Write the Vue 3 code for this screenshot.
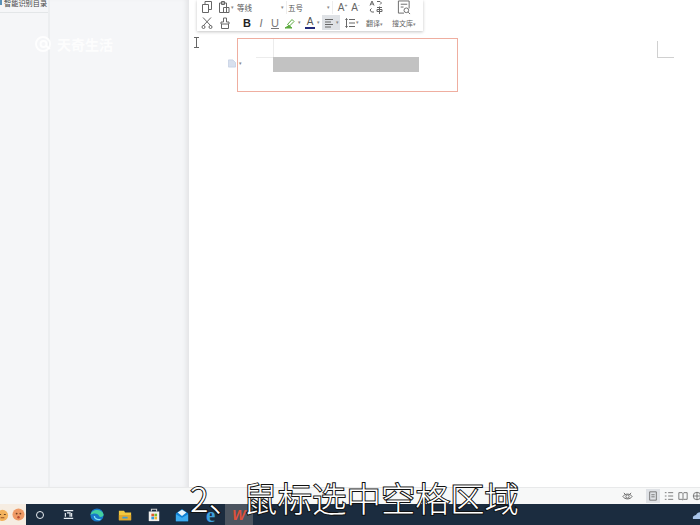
<template>
  <div class="screen">
    <div class="main">
      <!-- left panels -->
      <aside class="side">
        <div class="nav">
          <div class="nav-top"><i class="nav-dot"></i>智能识别目录</div>
        </div>
        <div class="pane"></div>
      </aside>

      <!-- document -->
      <section class="doc">
        <div class="toolbar">
          <div class="tool-row">
            <svg class="ic" viewBox="0 0 12 12"><path d="M1.500 3.500h6v8h-6zM4 3.500v-3h6.500v8H7.500" /></svg>
            <svg class="ic paste" viewBox="0 0 12 12"><path d="M1.500 2h7v9.500h-7zM3.500 .5h3v3h-3zM5.500 6.500h5.500v5H5.500z" /></svg>
            <span class="caret c1">▾</span>
            <div class="select first"><span>等线</span><span class="caret">▾</span></div>
            <div class="select second"><span>五号</span><span class="caret">▾</span></div>
            <span class="grow up">A<sup>+</sup></span>
            <span class="grow">A<sup>-</sup></span>
            <svg class="ic-big trans" viewBox="0 0 14 14"><path d="M1 5 3 .5 5 5M1.700 3.500h2.600M8 1h3l1.500 1.500L11 4M2.500 8 1 9.500 2.500 11.500H5M8 7h5M8 9h5v2H8zM10.500 6v7.500" /></svg>
            <svg class="ic-big search" viewBox="0 0 15 15"><path d="M1.500 .5h11.500v8M1.500 .5v13h6M4 4h7M4 7h3" /><circle cx="10" cy="10.500" r="2.500" /><path d="m12 12.500 2 2" /></svg>
          </div>
          <div class="tool-row">
            <svg class="ic" viewBox="0 0 12 12"><path d="M2 .5 10 9M10 .5 2 9" /><circle cx="2.500" cy="10" r="1.500" /><circle cx="9.500" cy="10" r="1.500" /></svg>
            <svg class="ic brush" viewBox="0 0 12 12"><path d="M4.500 1h3v4h2.500v2H2V5h2.500zM2.500 7v4.500h7V7" /></svg>
            <b class="fmt bold">B</b>
            <i class="fmt">I</i>
            <u class="fmt">U</u>
            <svg class="ic marker" viewBox="0 0 12 12"><path class="green" d="M1 11h7L5 8.500z" /><path class="green-line" d="M3.500 7.500 8 2.500l2 2-4.500 4.500z" /></svg>
            <span class="caret c2">▾</span>
            <span class="color-a">A</span>
            <span class="caret c2">▾</span>
            <div class="align-on">
              <svg class="ic" viewBox="0 0 12 12"><path d="M1 2.500h8M1 5h6M1 7.500h8M1 10h6" /></svg>
              <span class="caret">▾</span>
            </div>
            <svg class="ic list" viewBox="0 0 12 12"><path d="M5 2.500h6M5 6h6M5 9.500h6M2.500 1.500v9M1.500 3 2.500 1.500 3.500 3M1.500 9l1 1.500L3.500 9" /></svg>
            <span class="caret">▾</span>
            <span class="tool-text tr">翻译<span class="caret">▾</span></span>
            <span class="tool-text lib">搜文库<span class="caret">▾</span></span>
          </div>
        </div>

        <div class="page-area">
          <svg class="ibeam" viewBox="0 0 7 11"><path d="M1 .5h5M1 10.500h5M3.500 .5v10" /></svg>
          <div class="handle">
            <svg class="handle-ic" viewBox="0 0 9 9"><path d="M.5.5h5l3 3v5H.5z" /></svg>
            <span class="caret">▾</span>
          </div>
          <div class="selected-box">
            <div class="margin-mark"></div>
            <div class="gray-sel"></div>
          </div>
          <div class="corner"></div>
        </div>
      </section>
    </div>

    <footer class="status">
      <svg class="st eye" viewBox="0 0 12 12"><path d="M1 6c2-3.500 8-3.500 10 0-2 3.500-8 3.500-10 0zM2 2l1.500 1.500M10 2 8.500 3.500" /><circle cx="6" cy="6" r="1.800" /></svg>
      <div class="st-on">
        <svg class="st" viewBox="0 0 12 12"><path d="M2 1h8v10H2zM4 4.500h4M4 7h4" /></svg>
      </div>
      <svg class="st" viewBox="0 0 12 12"><path d="M1 2h2M5 2h6M1 6h2M5 6h6M1 10h2M5 10h6" /></svg>
      <svg class="st" viewBox="0 0 12 12"><path d="M1 2h4l1 1 1-1h4v8H7l-1 1-1-1H1zM6 3v7" /></svg>
      <svg class="st" viewBox="0 0 12 12"><circle cx="6" cy="6" r="4.500" /><path d="M1.500 6h9M6 1.500v9" /></svg>
    </footer>

    <nav class="taskbar">
      <div class="emoji-box">
        <svg class="face" viewBox="0 0 14 14"><circle cx="7" cy="8" r="6" fill="#f3b25c" /><path d="M3.500 7h2M8.500 7h2" stroke="#5a3a20" fill="none" /><path d="M5 10.500h4" stroke="#8a4a20" fill="none" /></svg>
        <svg class="face" viewBox="0 0 14 14"><circle cx="7" cy="7" r="6.500" fill="#ee9a66" /><circle cx="5" cy="6" r="1" fill="#704020" /><circle cx="9" cy="6" r="1" fill="#704020" /><circle cx="7" cy="10" r="1.300" fill="#b84a30" /></svg>
      </div>
      <div class="task-icons">
        <div class="ti"><span class="search-ring"></span></div>
        <div class="ti">
          <svg class="t-ic" viewBox="0 0 14 14"><path d="M1 2h12M1 12h12" stroke="#e8edf2" stroke-width="1.500" /><path d="M3 5v5M11 5v5M5 5h4v5" stroke="#e8edf2" stroke-width="1.500" fill="none" /></svg>
        </div>
        <div class="ti">
          <svg class="t-ic big" viewBox="0 0 16 16"><circle cx="8" cy="8" r="7.500" fill="#1878c8" /><path d="M.5 8C1.500 1 13 0 15.500 7c.5 3-4 4-5 2.500C10 6 4 5 .5 8z" fill="#43d0a0" /><path d="M5 9c0 3 3 5 7 4" stroke="#7fe3f5" fill="none" stroke-width="1.500" /></svg>
        </div>
        <div class="ti">
          <svg class="t-ic big" viewBox="0 0 16 16"><path d="M1 3h6l1 2h7v9H1z" fill="#f2c83f" /><path d="M1 8h14v6H1z" fill="#e2a92c" /><path d="M5 10h6v2H5z" fill="#3f9bd5" /></svg>
        </div>
        <div class="ti">
          <svg class="t-ic big" viewBox="0 0 16 16"><path d="M2 4h12v11H2z" fill="#f0f0ee" /><path d="M5 4V1.500h6V4" stroke="#d0d0d0" fill="none" stroke-width="1.200" /><path d="M5 6.500h3v3H5z" fill="#e25a2c" /><path d="M8.500 6.500h3v3h-3z" fill="#7fba2c" /><path d="M5 10h3v3H5z" fill="#2f9be0" /><path d="M8.500 10h3v3h-3z" fill="#f2b82c" /></svg>
        </div>
        <div class="ti">
          <svg class="t-ic big" viewBox="0 0 16 16"><path d="M1 6 8 1l7 5v9H1z" fill="#0e7fd2" /><path d="m1 7 7 4 7-4v8H1z" fill="#3cabf0" /><path d="m3 5 5-3 5 3-5 4z" fill="#e8f4fb" /></svg>
        </div>
        <div class="ti">
          <span class="ie">e</span>
        </div>
        <div class="ti wps">
          <span class="wps-w">W</span>
        </div>
      </div>
      <svg class="cloud" viewBox="0 0 14 10"><path d="M1 9c-1-3 2-4 3-4 1-3 6-4 8-1 2 0 2 5 2 5z" fill="#a9c5ea" /></svg>
    </nav>

    <!-- burned in subtitle and watermark lie over the video frame -->
    <div class="watermark">
      <svg class="wm-logo" viewBox="0 0 18 18"><circle cx="9" cy="9" r="7" /><circle cx="9.500" cy="9" r="3" /><path d="m12 11 4 3" /></svg>
      <span>天奇生活</span>
    </div>
    <div class="subtitle">2、鼠标选中空格区域</div>
  </div>
</template>

<script setup>
</script>

<style>
html, body {
  margin: 0;
  background: #fff;
}
</style>

<style scoped>
.screen {
  position: relative;
  width: 700px;
  height: 525px;
  overflow: hidden;
  display: flex;
  flex-direction: column;
  font-family: "Liberation Sans", "Noto Sans CJK SC", sans-serif;
  color: #444;
}

.main {
  flex: 1;
  display: flex;
  min-height: 0;
}

.side {
  width: 189px;
  display: flex;
  background: #f5f6f8;
  box-shadow: inset -5px 0 4px -2px #e4e5e7;
}

.nav {
  width: 48px;
  border-right: 2px solid #eceef0;
}

.nav-top {
  height: 12px;
  border-bottom: 1px solid #e3e6e8;
  font-size: 7.200px;
  line-height: 7px;
  white-space: nowrap;
  display: flex;
  color: #444;
}

.nav-dot {
  width: 2px;
  height: 5px;
  margin-right: 2px;
  background: #5a92b8;
  flex: none;
}

.pane {
  flex: 1;
}

.doc {
  flex: 1;
  position: relative;
  background: #fff;
}

.toolbar {
  position: absolute;
  z-index: 1;
  left: 8px;
  top: 0;
  width: 226px;
  height: 31px;
  background: #fff;
  box-shadow: 0 1px 3px #c4c4c4;
  display: flex;
  flex-direction: column;
  font-size: 7px;
}

.tool-row {
  height: 14px;
  display: flex;
  align-items: center;
  padding-left: 4px;
}

.tool-row + .tool-row {
  height: 17px;
}

.toolbar svg,
.status svg,
.ibeam {
  flex: none;
}

.toolbar path,
.toolbar circle,
.status path,
.status circle,
.ibeam path {
  fill: none;
  stroke: #666;
  stroke-width: 1;
}

.ic {
  width: 12px;
  height: 12px;
}

.paste {
  margin-left: 5px;
}

.brush {
  margin-left: 6px;
}

.caret {
  font-size: 5px;
  color: #888;
  line-height: 1;
}

.c1 {
  margin-left: 1px;
}

.c2 {
  margin-left: 2px;
}

.select {
  display: flex;
  justify-content: space-between;
  align-items: center;
  height: 13px;
  box-sizing: border-box;
  padding-right: 2px;
  border-right: 1px solid #eee;
  font-size: 7.500px;
  color: #555;
}

.first {
  width: 50px;
  margin-left: 3px;
}

.second {
  width: 46px;
  padding-left: 1px;
}

.grow {
  width: 13px;
  font-size: 10px;
  text-align: center;
  color: #666;
}

.up {
  margin-left: 3px;
}

.grow sup {
  font-size: 5px;
  line-height: 0;
}

.ic-big {
  height: 15px;
  width: 14px;
}

.trans {
  margin-left: 7px;
}

.search {
  margin-left: 14px;
}

.fmt {
  width: 14px;
  font-size: 11px;
  text-align: center;
  font-family: "Liberation Sans", sans-serif;
  font-weight: 400;
  color: #777;
}

.bold {
  margin-left: 9px;
  color: #222;
  font-weight: 700;
}

.marker {
  margin-left: 2px;
}

.marker path.green {
  fill: #5cab3f;
  stroke: #5cab3f;
}

.marker path.green-line {
  stroke: #5cab3f;
}

.color-a {
  width: 10px;
  margin-left: 4px;
  font-size: 10px;
  line-height: 10px;
  text-align: center;
  border-bottom: 2px solid #232a7a;
  color: #555;
}

.align-on {
  display: flex;
  align-items: center;
  height: 15px;
  margin-left: 2px;
  padding: 0 1px 0 2px;
  background: #dfe2e6;
}

.list {
  margin-left: 4px;
}

.tool-text {
  color: #666;
  white-space: nowrap;
}

.tr {
  margin-left: 7px;
}

.lib {
  margin-left: 9px;
}

.page-area {
  position: absolute;
  inset: 0;
}

.ibeam {
  position: absolute;
  left: 4px;
  top: 37px;
  width: 7px;
  height: 11px;
}

.handle {
  position: absolute;
  left: 39px;
  top: 59px;
  display: flex;
  align-items: center;
  gap: 3px;
}

.handle-ic {
  width: 8px;
  height: 9px;
}

.handle-ic path {
  fill: #d8e0ee;
  stroke: #c8d2e4;
}

.selected-box {
  position: absolute;
  left: 48px;
  top: 38px;
  width: 221px;
  height: 54px;
  box-sizing: border-box;
  border: 1px solid #efaea0;
}

.margin-mark {
  position: absolute;
  left: 18px;
  top: 0;
  width: 17px;
  height: 18px;
  border-right: 1px solid #ececec;
  border-bottom: 1px solid #ececec;
}

.gray-sel {
  position: absolute;
  left: 35px;
  top: 18px;
  width: 146px;
  height: 15px;
  background: #c2c2c2;
}

.corner {
  position: absolute;
  left: 468px;
  top: 41px;
  width: 16px;
  height: 16px;
  border-left: 1px solid #d0d0d0;
  border-bottom: 1px solid #d0d0d0;
}

.status {
  height: 16px;
  flex: none;
  background: #f7f8f8;
  border-top: 1px solid #e8e9ea;
  display: flex;
  align-items: center;
  justify-content: flex-end;
  gap: 4px;
  margin-right: -2px;
}

.st {
  width: 10px;
  height: 10px;
}

.eye {
  width: 11px;
  height: 11px;
  margin-right: 9px;
}

.st-on {
  width: 14px;
  height: 14px;
  display: flex;
  align-items: center;
  justify-content: center;
  background: #dfe2e6;
}

.taskbar {
  height: 21px;
  flex: none;
  background: #1b2c3f;
  display: flex;
  align-items: center;
}

.emoji-box {
  width: 26px;
  height: 100%;
  background: #f6ede2;
  display: flex;
  align-items: flex-end;
  overflow: hidden;
  flex: none;
}

.face {
  width: 13px;
  height: 13px;
  flex: none;
  margin-bottom: 4px;
}

.face:first-child {
  margin-left: -4px;
}

.face:last-child {
  margin-left: 3px;
}

.task-icons {
  display: flex;
  height: 100%;
}

.ti {
  width: 28.400px;
  height: 100%;
  display: flex;
  align-items: center;
  justify-content: center;
}

.search-ring {
  width: 6px;
  height: 6px;
  border: 1.500px solid #e8edf2;
  border-radius: 50%;
}

.t-ic {
  width: 11px;
  height: 11px;
}

.t-ic.big {
  width: 14px;
  height: 14px;
}

.ie {
  font-family: "Liberation Serif", serif;
  font-weight: bold;
  font-size: 21px;
  line-height: 18px;
  color: #3fa0dc;
}

.wps {
  background: #4c5560;
}

.wps-w {
  font-size: 14px;
  font-weight: bold;
  font-style: italic;
  color: #e0503a;
}

.cloud {
  margin-left: auto;
  width: 14px;
  height: 10px;
  margin-right: -6px;
}

.watermark {
  position: absolute;
  left: 34px;
  top: 34px;
  display: flex;
  align-items: center;
  gap: 5px;
  color: rgba(255, 255, 255, 0.85);
  font-size: 14px;
  font-weight: 700;
}

.wm-logo {
  width: 18px;
  height: 18px;
}

.wm-logo circle,
.wm-logo path {
  fill: none;
  stroke: rgba(255, 255, 255, 0.85);
  stroke-width: 2;
}

.subtitle {
  position: absolute;
  left: 190px;
  top: 477px;
  font-size: 34.500px;
  line-height: 40px;
  white-space: nowrap;
  color: #fff;
  -webkit-text-stroke: 2px #111;
  paint-order: stroke fill;
  font-family: "Noto Sans CJK SC", sans-serif;
  font-weight: 300;
}
</style>
